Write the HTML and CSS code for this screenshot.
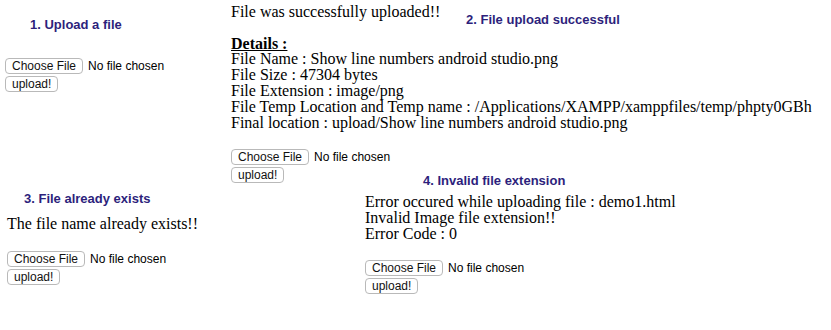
FILE: index.html
```html
<!DOCTYPE html>
<html lang="en">
<head>
  <meta charset="UTF-8" />
  <title>PHP File Upload - Examples</title>
  <link rel="stylesheet" href="styles.css">
</head>
<body>

  <div class="canvas">

    <!-- 1. empty form -->
    <h3 class="caption cap-1">1. Upload a file</h3>
    <div class="shot shot-1">
      <form class="upload-form">
        <div class="file-row">
          <button type="button" class="btn">Choose File</button>
          <span class="no-file">No file chosen</span>
        </div>
        <button type="button" class="btn">upload!</button>
      </form>
    </div>

    <!-- 2. success -->
    <h3 class="caption cap-2">2. File upload successful</h3>
    <div class="shot shot-2">
      <div class="result">
        File was successfully uploaded!!<br><br>
        <u><b>Details : </b></u><br>
        File Name : Show line numbers android studio.png<br>
        File Size : 47304 bytes<br>
        File Extension : image/png<br>
        File Temp Location and Temp name : /Applications/XAMPP/xamppfiles/temp/phpty0GBh<br>
        Final location : upload/Show line numbers android studio.png<br><br>
      </div>
      <form class="upload-form">
        <div class="file-row">
          <button type="button" class="btn">Choose File</button>
          <span class="no-file">No file chosen</span>
        </div>
        <button type="button" class="btn">upload!</button>
      </form>
    </div>

    <!-- 3. already exists -->
    <h3 class="caption cap-3">3. File already exists</h3>
    <div class="shot shot-3">
      <div class="result">
        The file name already exists!!<br><br>
      </div>
      <form class="upload-form">
        <div class="file-row">
          <button type="button" class="btn">Choose File</button>
          <span class="no-file">No file chosen</span>
        </div>
        <button type="button" class="btn">upload!</button>
      </form>
    </div>

    <!-- 4. bad extension -->
    <h3 class="caption cap-4">4. Invalid file extension</h3>
    <div class="shot shot-4">
      <div class="result">
        Error occured while uploading file : demo1.html<br>
        Invalid Image file extension!!<br>
        Error Code : 0<br><br>
      </div>
      <form class="upload-form">
        <div class="file-row">
          <button type="button" class="btn">Choose File</button>
          <span class="no-file">No file chosen</span>
        </div>
        <button type="button" class="btn">upload!</button>
      </form>
    </div>

  </div>

</body>
</html>
```

FILE: styles.css
```css
/* collage of four screenshots */
body {
  margin: 0;
  background-color: #fff;
  font-family: "Liberation Serif", "Times New Roman", serif;
  color: #000;
}
.canvas {
  position: relative;
  width: 831px;
  height: 330px;
  overflow: hidden;
}
.caption {
  position: absolute;
  margin: 0;
  font-family: "Liberation Sans", Arial, sans-serif;
  font-size: 13px;
  font-weight: bold;
  line-height: 15px;
  color: #2d1f7c;
  white-space: nowrap;
}
.cap-1 { left: 30px; top: 17px; }
.cap-2 { left: 466px; top: 12px; }
.cap-3 { left: 24px; top: 191px; }
.cap-4 { left: 423px; top: 173px; }

.shot {
  position: absolute;
}
.shot-1 { left: 5px; top: 55px; }
.shot-2 { left: 231px; top: 4px; }
.shot-3 { left: 7px; top: 216px; }
.shot-4 { left: 365px; top: 194px; }

.result {
  font-size: 16px;
  line-height: 15.8px;
  white-space: nowrap;
}

.upload-form {
  display: flex;
  flex-direction: column;
  align-items: flex-start;
  gap: 2px;
  margin-top: 3px;
}
.file-row {
  display: flex;
  align-items: center;
  gap: 5px;
}
.btn {
  font-family: "Liberation Sans", Arial, sans-serif;
  font-size: 12px;
  line-height: 14px;
  color: #111;
  background-color: #fff;
  border: 1px solid #b9b9b9;
  border-radius: 4px;
  padding: 0 6px;
  height: 16px;
  margin: 0;
}
.no-file {
  font-family: "Liberation Sans", Arial, sans-serif;
  font-size: 12px;
  color: #000;
}
```
